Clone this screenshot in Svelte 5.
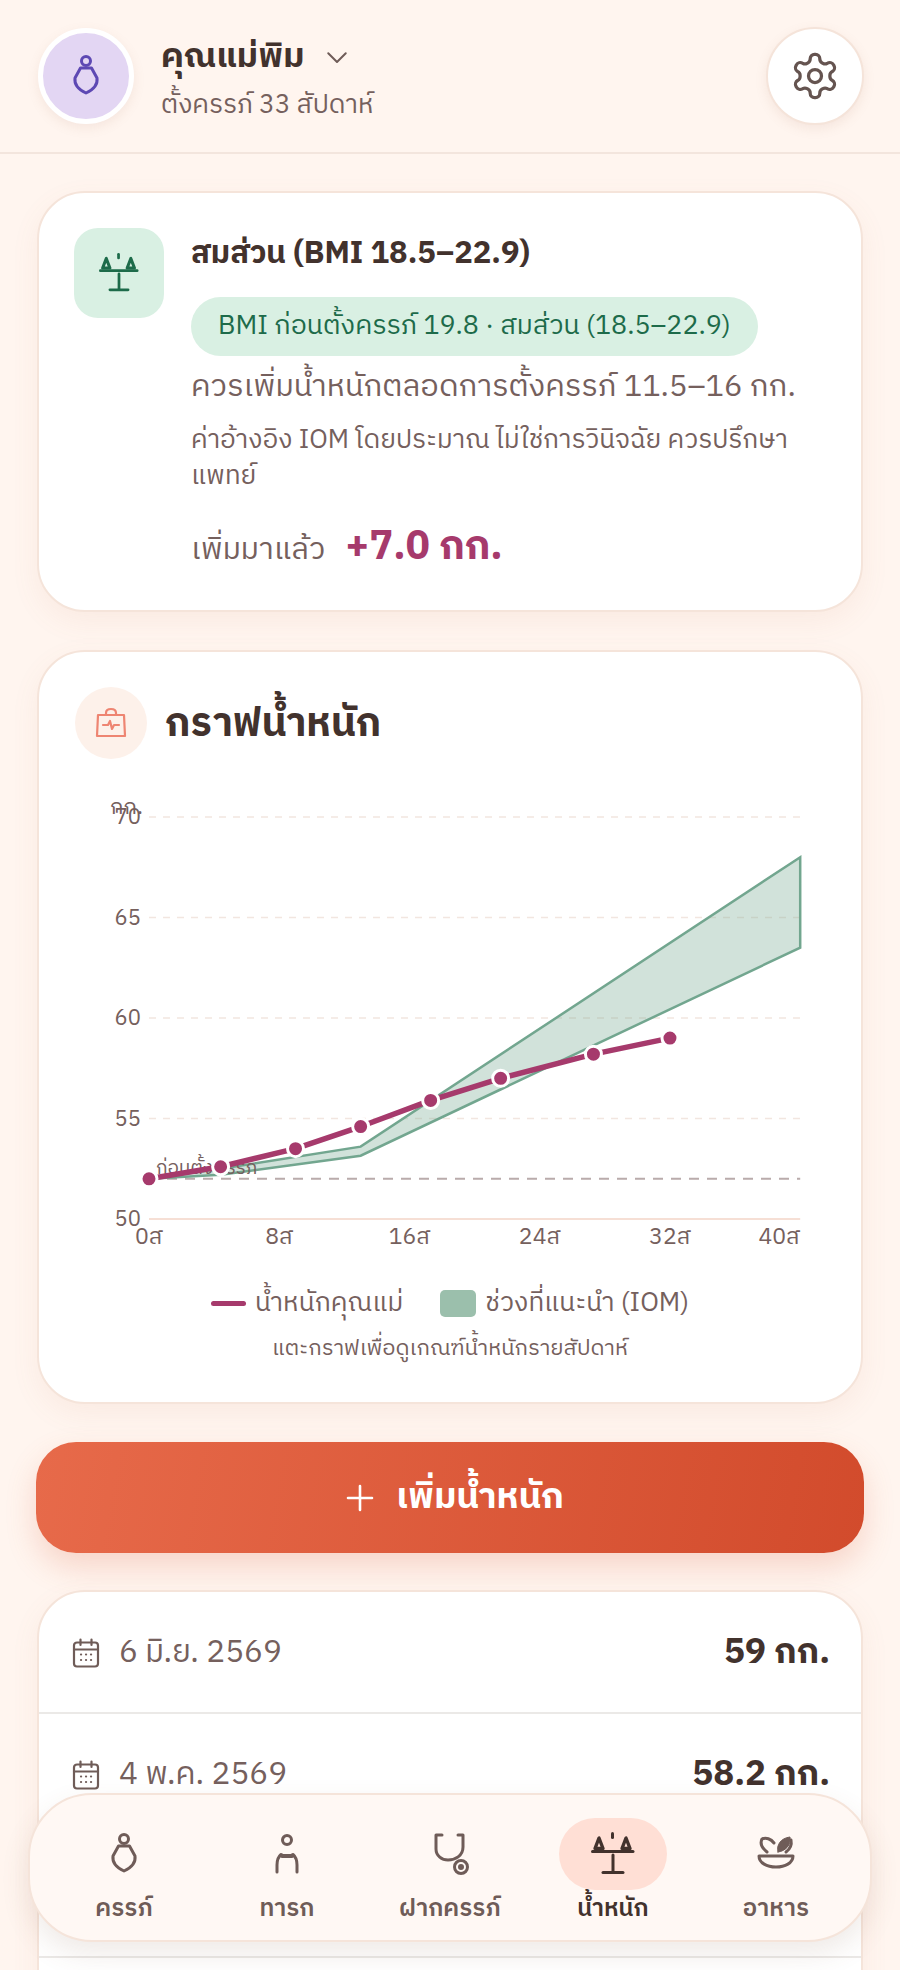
<script lang="ts">
  // กราฟน้ำหนัก: แปลงสัปดาห์/กก. เป็นพิกัด svg
  const chartW = 750;
  const chartH = 470;
  const xAt = (week: number) => 74 + week * 16.28;
  const yAt = (kg: number) => 429 - (kg - 50) * 20.1;

  const gridKg = [70, 65, 60, 55];
  const weekTicks = [0, 8, 16, 24, 32];

  const bandTop = [[0, 52], [4.4, 52.5], [13, 53.6], [40, 68]];
  const bandLow = [[40, 63.5], [13, 53.15], [4.4, 52.2], [0, 52]];
  const bandPath = [...bandTop, ...bandLow].map(([w, k]) => `${xAt(w)},${yAt(k)}`).join(' ');

  const points = [[0, 52], [4.4, 52.6], [9, 53.5], [13, 54.6], [17.3, 55.9], [21.6, 57], [27.3, 58.2], [32, 59]];
  const linePath = points.map(([w, k]) => `${xAt(w)},${yAt(k)}`).join(' ');

  const rows = [
    { date: '6 มิ.ย. 2569', kg: '59 กก.' },
    { date: '4 พ.ค. 2569', kg: '58.2 กก.' },
    { date: '2 เม.ย. 2569', kg: '57 กก.' }
  ];

  const tabs = [
    { id: 'preg', label: 'ครรภ์' },
    { id: 'baby', label: 'ทารก' },
    { id: 'anc', label: 'ฝากครรภ์' },
    { id: 'weight', label: 'น้ำหนัก' },
    { id: 'food', label: 'อาหาร' }
  ];
</script>

{#snippet pregIcon(size: number)}
  <svg width={size} height={size} viewBox="0 0 44 44" fill="none" stroke="currentColor" stroke-width="3" stroke-linejoin="round">
    <circle cx="22" cy="7" r="4.5" />
    <path d="M16.5 14H27.5L33 24C34 31 28.5 36 22 39C15.5 36 10 31 11 24Z" />
  </svg>
{/snippet}

{#snippet scaleIcon(size: number)}
  <svg width={size} height={size} viewBox="0 0 44 44" fill="none" stroke="currentColor" stroke-width="3" stroke-linecap="round" stroke-linejoin="round">
    <path d="M21.5 1.5V5.5" />
    <path d="M8 6L4 16.5H12Z" stroke-width="3.4" />
    <path d="M35 6L31 16.5H39Z" stroke-width="3.4" />
    <path d="M1.5 19.5H42" />
    <path d="M22 23V40" />
    <path d="M12 40.5H32" />
  </svg>
{/snippet}

<div class="page">
  <header class="top">
    <div class="avatar">{@render pregIcon(44)}</div>
    <div class="who">
      <div class="name-row">
        <span class="name">คุณแม่พิม</span>
        <svg class="chev" width="30" height="30" viewBox="0 0 24 24" fill="none" stroke="currentColor" stroke-width="1.6" stroke-linecap="round" stroke-linejoin="round"><path d="M5 9l7 7 7-7" /></svg>
      </div>
      <div class="sub">ตั้งครรภ์ 33 สัปดาห์</div>
    </div>
    <button class="gear" aria-label="ตั้งค่า">
      <svg width="52" height="52" viewBox="0 0 24 24" fill="none" stroke="currentColor" stroke-width="1.5" stroke-linecap="round" stroke-linejoin="round">
        <path d="M12.22 2h-.44a2 2 0 0 0-2 2v.18a2 2 0 0 1-1 1.73l-.43.25a2 2 0 0 1-2 0l-.15-.08a2 2 0 0 0-2.73.73l-.22.38a2 2 0 0 0 .73 2.73l.15.1a2 2 0 0 1 1 1.72v.51a2 2 0 0 1-1 1.74l-.15.09a2 2 0 0 0-.73 2.73l.22.38a2 2 0 0 0 2.73.73l.15-.08a2 2 0 0 1 2 0l.43.25a2 2 0 0 1 1 1.73V20a2 2 0 0 0 2 2h.44a2 2 0 0 0 2-2v-.18a2 2 0 0 1 1-1.73l.43-.25a2 2 0 0 1 2 0l.15.08a2 2 0 0 0 2.73-.73l.22-.39a2 2 0 0 0-.73-2.73l-.15-.08a2 2 0 0 1-1-1.74v-.5a2 2 0 0 1 1-1.74l.15-.09a2 2 0 0 0 .73-2.73l-.22-.38a2 2 0 0 0-2.73-.73l-.15.08a2 2 0 0 1-2 0l-.43-.25a2 2 0 0 1-1-1.73V4a2 2 0 0 0-2-2z" />
        <circle cx="12" cy="12" r="3" />
      </svg>
    </button>
  </header>

  <main class="content">
    <section class="card bmi">
      <div class="bmi-icon">{@render scaleIcon(40)}</div>
      <div class="bmi-body">
        <h2>สมส่วน (BMI 18.5–22.9)</h2>
        <div class="pill">BMI ก่อนตั้งครรภ์ 19.8 · สมส่วน (18.5–22.9)</div>
        <p class="goal">ควรเพิ่มน้ำหนักตลอดการตั้งครรภ์ 11.5–16 กก.</p>
        <p class="note">ค่าอ้างอิง IOM โดยประมาณ ไม่ใช่การวินิจฉัย ควรปรึกษาแพทย์</p>
        <div class="gained"><span>เพิ่มมาแล้ว</span><strong>+7.0 กก.</strong></div>
      </div>
    </section>

    <section class="card chart-card">
      <div class="chart-head">
        <div class="bag">
          <svg width="32" height="32" viewBox="0 0 32 32" fill="none" stroke="currentColor" stroke-width="2.2" stroke-linejoin="round" stroke-linecap="round">
            <path d="M3 8H29L30 29H2Z" />
            <path d="M11 8V6C11 3.5 13 2 16 2C19 2 21 3.5 21 6V8" />
            <path d="M8 18H13L15 14L17 22L19 18H24" />
          </svg>
        </div>
        <h2>กราฟน้ำหนัก</h2>
      </div>

      <svg class="chart" width={chartW} height={chartH} viewBox="0 0 {chartW} {chartH}">
        <text class="tick" x="35" y="24">กก.</text>
        {#each gridKg as kg}
          <line x1={xAt(0)} x2={xAt(40)} y1={yAt(kg)} y2={yAt(kg)} class="grid" />
          <text class="tick" x="66" y={yAt(kg) + 7} text-anchor="end">{kg}</text>
        {/each}
        <text class="tick" x="66" y={yAt(50) + 7} text-anchor="end">50</text>
        <line x1={xAt(0)} x2={xAt(40)} y1={yAt(50)} y2={yAt(50)} class="axis" />
        <line x1={xAt(0)} x2={xAt(40)} y1={yAt(52)} y2={yAt(52)} class="baseline" />
        {#each weekTicks as w}
          <text class="tick week" x={xAt(w)} y="454" text-anchor="middle">{w}ส</text>
        {/each}
        <text class="tick week" x={xAt(40)} y="454" text-anchor="end">40ส</text>

        <polygon points={bandPath} class="band" />
        <text class="pre" x="81" y="384">ก่อนตั้งครรภ์</text>
        <polyline points={linePath} class="line" />
        {#each points as [w, k]}
          <circle cx={xAt(w)} cy={yAt(k)} r="8" class="dot" />
        {/each}
      </svg>

      <div class="legend">
        <span class="leg-line"></span><span>น้ำหนักคุณแม่</span>
        <span class="leg-box"></span><span>ช่วงที่แนะนำ (IOM)</span>
      </div>
      <p class="hint">แตะกราฟเพื่อดูเกณฑ์น้ำหนักรายสัปดาห์</p>
    </section>

    <button class="add">
      <svg width="32" height="32" viewBox="0 0 32 32" fill="none" stroke="currentColor" stroke-width="2.6" stroke-linecap="round"><path d="M16 4V28M4 16H28" /></svg>
      เพิ่มน้ำหนัก
    </button>

    <section class="card list">
      {#each rows as row}
        <div class="row">
          <svg class="cal" width="28" height="30" viewBox="0 0 28 30" fill="none" stroke="currentColor" stroke-width="2.2" stroke-linecap="round">
            <rect x="2" y="4.5" width="24" height="24" rx="3" />
            <path d="M2 11.5H26M8.5 1.5V7M19.5 1.5V7" />
            <path d="M9 16.5h.1M14 16.5h.1M19 16.5h.1M9 22h.1M14 22h.1M19 22h.1" />
          </svg>
          <span class="date">{row.date}</span>
          <span class="kg">{row.kg}</span>
        </div>
      {/each}
    </section>
  </main>

  <nav class="tabs">
    {#each tabs as tab}
      <div class="tab" class:active={tab.id === 'weight'}>
        <div class="tab-icon">
          {#if tab.id === 'preg'}
            {@render pregIcon(44)}
          {:else if tab.id === 'baby'}
            <svg width="44" height="44" viewBox="0 0 44 44" fill="none" stroke="currentColor" stroke-width="3" stroke-linecap="round" stroke-linejoin="round">
              <circle cx="22" cy="8" r="4.5" />
              <path d="M12 40V33C12 28 13 25 16 22.5C19 25 25 25 28 22.5C31 25 32 28 32 33V40" />
              <path d="M17 24H27" stroke-width="4" />
            </svg>
          {:else if tab.id === 'anc'}
            <svg width="44" height="44" viewBox="0 0 44 44" fill="none" stroke="currentColor" stroke-width="3" stroke-linecap="round" stroke-linejoin="round">
              <path d="M14 3H8V17C8 24 14 28 20 28C27 28 35 24 35 15V3H30" />
              <circle cx="33" cy="35" r="6.5" />
              <circle cx="33" cy="35" r="1.5" fill="currentColor" />
            </svg>
          {:else if tab.id === 'weight'}
            {@render scaleIcon(44)}
          {:else}
            <svg width="44" height="44" viewBox="0 0 44 44" fill="none" stroke="currentColor" stroke-width="3" stroke-linecap="round" stroke-linejoin="round">
              <path d="M5 24H39C39 31 31 35 22 35C13 35 5 31 5 24Z" />
              <path d="M13 20C8 16 6 11 8 7C12 5 17 7 20 11" />
              <path d="M32 20C36 17 38 13 37 8" />
              <path d="M24 20C22 13 27 6 36 5C37 13 32 19 24 20Z" fill="currentColor" stroke-width="1" />
            </svg>
          {/if}
        </div>
        <span>{tab.label}</span>
      </div>
    {/each}
  </nav>
</div>

<style>
  :global(body) {
    margin: 0;
    background: #fff5ef;
    overflow: hidden;
  }

  .page {
    height: 1970px;
    overflow: hidden;
    position: relative;
    font-family: "IBM Plex Sans Thai", "Noto Sans Thai", "Noto Sans", "Open Sans", sans-serif;
    color: #42322d;
  }

  h2,
  p {
    margin: 0;
  }

  .top {
    display: flex;
    align-items: center;
    height: 152px;
    padding: 0 36px 0 38px;
    border-bottom: 2px solid #f3e5dd;
    box-sizing: content-box;
  }

  .avatar {
    width: 86px;
    height: 86px;
    border-radius: 50%;
    border: 5px solid #fff;
    background: #e3d6f3;
    color: #5d48b3;
    display: flex;
    align-items: center;
    justify-content: center;
    box-shadow: 0 4px 12px rgba(170, 120, 100, 0.12);
  }

  .who {
    margin-left: 27px;
    padding-top: 5px;
    flex: 1;
  }

  .name-row {
    display: flex;
    align-items: center;
    gap: 18px;
    height: 50px;
  }

  .name {
    font-size: 34px;
    font-weight: 700;
    line-height: 50px;
  }

  .chev {
    color: #6f5c58;
  }

  .sub {
    font-size: 26.2px;
    color: #75605d;
    line-height: 38px;
    margin-top: 5px;
  }

  .gear {
    flex: none;
    width: 98px;
    height: 98px;
    border-radius: 50%;
    border: 2px solid #f5e4da;
    background: #fff;
    color: #655450;
    display: flex;
    align-items: center;
    justify-content: center;
    padding: 0;
    box-shadow: 0 4px 12px rgba(170, 120, 100, 0.12);
  }

  .content {
    display: flex;
    flex-direction: column;
    gap: 39px;
    padding: 37px 37px 0;
  }

  .card {
    background: #fff;
    border: 2px solid #f5e4da;
    border-radius: 48px;
    box-shadow: 0 10px 28px rgba(190, 120, 90, 0.08);
  }

  .bmi {
    display: flex;
    gap: 27px;
    padding: 35px 35px 32px;
    height: 421px;
    box-sizing: border-box;
  }

  .bmi-icon {
    flex: none;
    width: 90px;
    height: 90px;
    border-radius: 24px;
    background: #d9f0e3;
    color: #1d6b4a;
    display: flex;
    align-items: center;
    justify-content: center;
  }

  .bmi-body {
    flex: 1;
    min-width: 0;
  }

  .bmi-body h2 {
    font-size: 31px;
    font-weight: 700;
    line-height: 44px;
    margin-top: 4px;
  }

  .pill {
    display: inline-block;
    margin-top: 21px;
    padding: 0 27px;
    height: 59px;
    line-height: 58px;
    border-radius: 30px;
    background: #d9f0e3;
    color: #1d6b4a;
    font-size: 26.8px;
    font-weight: 400;
    white-space: nowrap;
  }

  .goal {
    font-size: 30.8px;
    color: #75605d;
    line-height: 48px;
    margin-top: 7px;
    white-space: nowrap;
  }

  .note {
    font-size: 26.2px;
    color: #75605d;
    line-height: 36px;
    margin-top: 12px;
  }

  .gained {
    display: flex;
    align-items: baseline;
    gap: 20px;
    margin-top: 19px;
    font-size: 30.5px;
    color: #75605d;
  }

  .gained strong {
    font-size: 40px;
    font-weight: 700;
    color: #a63a6c;
  }

  .chart-card {
    height: 754px;
    margin-top: -1px;
    box-sizing: border-box;
    padding: 35px 36px 0;
  }

  .chart-head {
    display: flex;
    align-items: center;
    gap: 18px;
  }

  .bag {
    width: 72px;
    height: 72px;
    border-radius: 50%;
    background: #fdf1ea;
    color: #ee8572;
    display: flex;
    align-items: center;
    justify-content: center;
  }

  .chart-head h2 {
    font-size: 39.6px;
    font-weight: 700;
    line-height: 68px;
    padding-top: 4px;
  }

  .chart {
    display: block;
    margin-top: 31px;
  }

  .tick {
    font-size: 22px;
    fill: #75605d;
  }

  .tick.week {
    font-size: 23px;
  }

  .pre {
    font-size: 19px;
    fill: #75605d;
  }

  .grid {
    stroke: #f2e6e0;
    stroke-width: 1.6;
    stroke-dasharray: 7 7;
  }

  .axis {
    stroke: #f6dfd5;
    stroke-width: 2;
  }

  .baseline {
    stroke: #b9abab;
    stroke-width: 2;
    stroke-dasharray: 10 8;
  }

  .band {
    fill: rgba(122, 172, 150, 0.35);
    stroke: #72a68f;
    stroke-width: 2.5;
  }

  .line {
    fill: none;
    stroke: #a63a6c;
    stroke-width: 5.5;
    stroke-linejoin: round;
  }

  .dot {
    fill: #a63a6c;
    stroke: #fff;
    stroke-width: 3;
  }

  .legend {
    display: flex;
    align-items: center;
    justify-content: center;
    font-size: 26.4px;
    color: #75605d;
    margin-top: 23px;
    height: 40px;
  }

  .leg-line {
    width: 35px;
    height: 5px;
    border-radius: 3px;
    background: #a63a6c;
    margin-right: 9px;
  }

  .leg-box {
    width: 36px;
    height: 27px;
    border-radius: 5px;
    background: #9bbfac;
    margin: 0 9px 0 37px;
  }

  .hint {
    text-align: center;
    font-size: 22px;
    color: #75605d;
    margin-top: 9px;
    line-height: 34px;
  }

  .add {
    height: 111px;
    border: none;
    border-radius: 40px;
    margin: -1px -1px 0;
    padding: 0 0 0 8px;
    background: linear-gradient(100deg, #e76a4a, #d24b2c);
    color: #fff;
    font: inherit;
    font-size: 35.6px;
    font-weight: 700;
    display: flex;
    align-items: center;
    justify-content: center;
    gap: 20px;
    box-shadow: 0 14px 30px rgba(220, 100, 70, 0.22);
  }

  .list {
    margin-top: -2px;
    padding-bottom: 200px;
  }

  .row {
    display: flex;
    align-items: center;
    height: 122px;
    box-sizing: border-box;
    padding: 2px 31px 0 33px;
    border-bottom: 2px solid #ebe9e7;
  }

  .cal {
    color: #6f5c58;
    flex: none;
  }

  .date {
    margin-left: 19px;
    font-size: 31.5px;
    color: #75605d;
    flex: 1;
  }

  .kg {
    font-size: 35px;
    font-weight: 700;
  }

  .tabs {
    position: absolute;
    left: 28px;
    top: 1793px;
    width: 844px;
    height: 149px;
    box-sizing: border-box;
    border: 2px solid #f5e4da;
    border-radius: 64px;
    background: #fff8f4;
    box-shadow: 0 12px 28px rgba(120, 80, 60, 0.12);
    display: grid;
    grid-template-columns: repeat(5, 163px);
    justify-content: center;
    padding-top: 23px;
  }

  .tab {
    display: flex;
    flex-direction: column;
    align-items: center;
    color: #6f5c58;
    font-size: 24px;
    font-weight: 600;
  }

  .tab-icon {
    width: 108px;
    height: 72px;
    display: flex;
    align-items: center;
    justify-content: center;
    border-radius: 36px;
  }

  .tab span {
    line-height: 34px;
    margin-top: 2px;
  }

  .tab.active {
    color: #42322d;
  }

  .tab.active .tab-icon {
    background: #ffdfd5;
  }
</style>
